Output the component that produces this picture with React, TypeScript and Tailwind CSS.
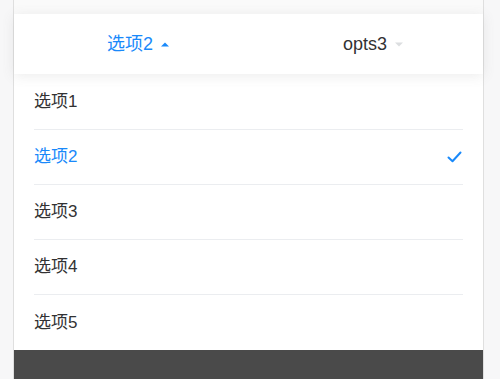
import React from "react"

const options = ["选项1", "选项2", "选项3", "选项4", "选项5"]

function Arrow({ up, active }: { up?: boolean; active?: boolean }) {
  return (
    <svg width="8" height="5" viewBox="0 0 8 5" className="ml-2">
      <path
        d={up ? "M0 4.5 L4 0.5 L8 4.5 Z" : "M0 0.5 L4 4.5 L8 0.5 Z"}
        fill={active ? "#1989fa" : "#dcdee0"}
      />
    </svg>
  )
}

export default function App() {
  const selected = 1
  return (
    <div
      className="w-[500px] h-[379px] overflow-hidden bg-[#f7f7f8] flex"
      style={{ fontFamily: '"Liberation Sans", "Noto Sans CJK SC", sans-serif' }}
    >
      <div className="ml-[13px] w-[471px] h-full border-x border-[#dfdfdf] bg-white flex flex-col">
        {/* top strip */}
        <div className="h-[14px] bg-[#fafafa] shrink-0" />

        {/* menu bar */}
        <div className="relative z-10 h-[60px] shrink-0 flex bg-white shadow-[0_2px_12px_rgba(100,101,102,0.12)]">
          <div className="flex-1 flex items-center justify-center pl-[14px]">
            <span className="text-[18px] text-[#1989fa]">选项2</span>
            <Arrow up active />
          </div>
          <div className="flex-1 flex items-center justify-center pl-[15px]">
            <span className="text-[18px] text-[#323233]">opts3</span>
            <Arrow />
          </div>
        </div>

        {/* dropdown list */}
        <div className="flex flex-col bg-white pt-px">
          {options.map((opt, i) => (
            <div key={opt} className="px-5">
              <div
                className={`h-[55px] flex items-center justify-between ${
                  i < options.length - 1 ? "border-b border-[#ebedf0]" : ""
                }`}
              >
                <span
                  className={`text-[17px] ${
                    i === selected ? "text-[#1989fa]" : "text-[#323233]"
                  }`}
                >
                  {opt}
                </span>
                {i === selected && (
                  <svg width="15" height="12" viewBox="0 0 15 12" className="mr-[1px]">
                    <path
                      d="M1.5 6.5 L5.5 10.2 L13.5 1.5"
                      fill="none"
                      stroke="#1989fa"
                      strokeWidth="2"
                      strokeLinecap="round"
                      strokeLinejoin="round"
                    />
                  </svg>
                )}
              </div>
            </div>
          ))}
        </div>

        {/* overlay */}
        <div className="flex-1 bg-[#4a4a4a]" />
      </div>
    </div>
  )
}
